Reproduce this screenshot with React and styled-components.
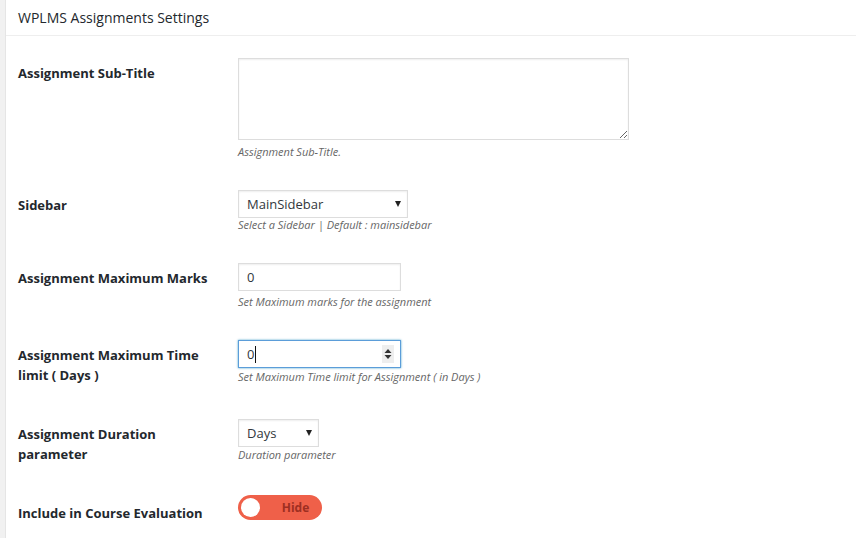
import styled, { createGlobalStyle } from "styled-components";

const GlobalStyle = createGlobalStyle`
  body {
    margin: 0;
    background: #fff;
    font-family: "Open Sans", "Noto Sans", sans-serif;
    color: #23282d;
  }
`;

const StyledPage = styled.div`
  display: flex;
  min-height: 538px;
`;

const StyledGutter = styled.div`
  width: 5px;
  background-color: #f1f1f1;
`;

const StyledPanel = styled.div`
  flex: 1;
  border-left: 1px solid #e5e5e5;
  background-color: #fff;
`;

const StyledHeader = styled.div`
  height: 36px;
  box-sizing: border-box;
  border-bottom: 1px solid #eee;
  padding: 0 12px;
  display: flex;
  align-items: center;
  font-size: 14px;
  color: #23282d;
`;

const StyledForm = styled.div`
  padding: 7px 0 0 12px;
`;

const StyledRow = styled.div`
  display: grid;
  grid-template-columns: 220px 1fr;
`;

const StyledLabel = styled.div`
  width: 200px;
  padding: 20px 0 19px;
  font-size: 13px;
  font-weight: 700;
  line-height: 20px;
  color: #23282d;
`;

const StyledField = styled.div`
  padding: 15px 0;
`;

const StyledTextArea = styled.textarea`
  display: block;
  box-sizing: border-box;
  width: 391px;
  height: 82px;
  margin: 0;
  border: 1px solid #ddd;
  box-shadow: inset 0 1px 2px rgba(0, 0, 0, 0.07);
  resize: vertical;
  font-family: inherit;
`;

const StyledSelectWrap = styled.div`
  position: relative;
  width: ${({ width }) => width}px;
`;

const StyledSelect = styled.select`
  display: block;
  box-sizing: border-box;
  width: 100%;
  height: 28px;
  margin: 0;
  padding: 0 24px 0 8px;
  border: 1px solid #ddd;
  border-radius: 0;
  background: #fff;
  box-shadow: inset 0 1px 2px rgba(0, 0, 0, 0.07);
  appearance: none;
  font-family: "Open Sans", sans-serif;
  font-size: 13px;
  color: #32373c;
`;

const StyledArrow = styled.span`
  position: absolute;
  right: 7px;
  top: 11px;
  width: 0;
  height: 0;
  border-left: 3.5px solid transparent;
  border-right: 3.5px solid transparent;
  border-top: 6px solid #222;
  pointer-events: none;
`;

const StyledInput = styled.input`
  display: block;
  box-sizing: border-box;
  width: 163px;
  height: 28px;
  margin: 0;
  padding: 0 8px;
  border: 1px solid #ddd;
  box-shadow: inset 0 1px 2px rgba(0, 0, 0, 0.07);
  font-family: "Open Sans", sans-serif;
  font-size: 13px;
  color: #32373c;
`;

const StyledFocusBox = styled.div`
  display: flex;
  align-items: center;
  box-sizing: border-box;
  width: 163px;
  height: 28px;
  padding: 0 6px 0 8px;
  border: 1px solid #5b9dd9;
  box-shadow: 0 0 2px rgba(30, 140, 190, 0.8);
  font-size: 13px;
  color: #32373c;
`;

const StyledValue = styled.span`
  flex: 1;
  display: flex;
  align-items: center;
`;

const StyledCaret = styled.span`
  display: inline-block;
  width: 1px;
  height: 17px;
  margin-left: 1px;
  background-color: #111;
`;

const StyledSpinner = styled.span`
  display: flex;
  align-items: center;
  justify-content: center;
  width: 12px;
  height: 18px;
  background-color: #eee;
`;

const StyledDesc = styled.p`
  margin: ${({ gap }) => gap || 0}px 0 0;
  font-size: 11px;
  font-style: italic;
  line-height: 17px;
  color: #666;
`;

const StyledToggle = styled.div`
  display: flex;
  align-items: center;
  box-sizing: border-box;
  width: 84px;
  height: 25px;
  padding: 0 3px;
  margin-top: -3px;
  border-radius: 13px;
  background-color: #ef6049;
`;

const StyledKnob = styled.span`
  width: 19px;
  height: 19px;
  border-radius: 50%;
  background-color: #fff;
`;

const StyledToggleText = styled.span`
  flex: 1;
  text-align: center;
  padding-left: 12px;
  font-size: 12px;
  font-weight: 700;
  color: #9e2f22;
`;

function Select({ width, value }) {
  return (
    <StyledSelectWrap width={width}>
      <StyledSelect defaultValue={value}>
        <option>{value}</option>
      </StyledSelect>
      <StyledArrow />
    </StyledSelectWrap>
  );
}

export default function App() {
  return (
    <>
      <GlobalStyle />
      <StyledPage>
        <StyledGutter />
        <StyledPanel>
          <StyledHeader>WPLMS Assignments Settings</StyledHeader>
          <StyledForm>
            <StyledRow>
              <StyledLabel>Assignment Sub-Title</StyledLabel>
              <StyledField>
                <StyledTextArea />
                <StyledDesc gap={3}>Assignment Sub-Title.</StyledDesc>
              </StyledField>
            </StyledRow>
            <StyledRow>
              <StyledLabel>Sidebar</StyledLabel>
              <StyledField>
                <Select width={170} value="MainSidebar" />
                <StyledDesc gap={-2}>Select a Sidebar | Default : mainsidebar</StyledDesc>
              </StyledField>
            </StyledRow>
            <StyledRow>
              <StyledLabel>Assignment Maximum Marks</StyledLabel>
              <StyledField>
                <StyledInput type="text" defaultValue="0" />
                <StyledDesc gap={2}>Set Maximum marks for the assignment</StyledDesc>
              </StyledField>
            </StyledRow>
            <StyledRow>
              <StyledLabel>Assignment Maximum Time limit ( Days )</StyledLabel>
              <StyledField>
                <StyledFocusBox>
                  <StyledValue>
                    0<StyledCaret />
                  </StyledValue>
                  <StyledSpinner>
                    <svg width="8" height="12" viewBox="0 0 8 12">
                      <path d="M4 1 L7.5 5 L0.5 5 Z" fill="#333" />
                      <path d="M4 11 L7.5 7 L0.5 7 Z" fill="#333" />
                    </svg>
                  </StyledSpinner>
                </StyledFocusBox>
                <StyledDesc>Set Maximum Time limit for Assignment ( in Days )</StyledDesc>
              </StyledField>
            </StyledRow>
            <StyledRow>
              <StyledLabel>Assignment Duration parameter</StyledLabel>
              <StyledField>
                <Select width={81} value="Days" />
                <StyledDesc gap={-1}>Duration parameter</StyledDesc>
              </StyledField>
            </StyledRow>
            <StyledRow>
              <StyledLabel>Include in Course Evaluation</StyledLabel>
              <StyledField>
                <StyledToggle>
                  <StyledKnob />
                  <StyledToggleText>Hide</StyledToggleText>
                </StyledToggle>
              </StyledField>
            </StyledRow>
          </StyledForm>
        </StyledPanel>
      </StyledPage>
    </>
  );
}
